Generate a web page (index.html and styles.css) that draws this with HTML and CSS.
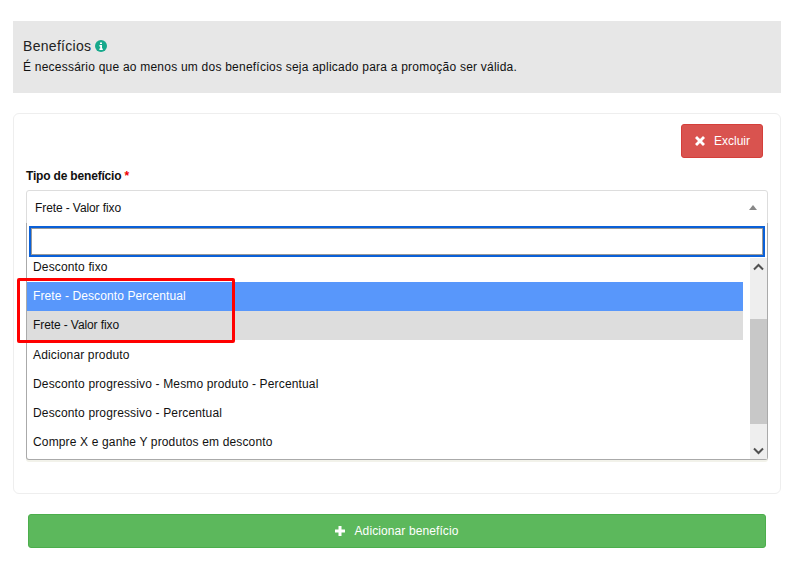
FILE: index.html
```html
<!DOCTYPE html>
<html lang="pt-BR">
<head>
  <meta charset="UTF-8">
  <title>Benefícios</title>
  <link rel="stylesheet" href="styles.css">
</head>
<body>

  <div class="section-head">
    <h4>Benefícios
      <svg class="info-icon" width="12" height="12" viewBox="0 0 12 12"><circle cx="6" cy="6" r="6" fill="#17a98c"/><path d="M5 2.400h2v1.600H5zM4.400 5h2.600v3.400h.8V10H4.400V8.400h.8V6.500h-.8z" fill="#fff"/></svg>
    </h4>
    <p>É necessário que ao menos um dos benefícios seja aplicado para a promoção ser válida.</p>
  </div>

  <div class="card">
    <div class="card-actions">
      <button class="btn btn-danger" type="button">
        <svg width="12" height="12" viewBox="0 0 12 12"><path d="M3 1l3 3 3-3 2 2-3 3 3 3-2 2-3-3-3 3-2-2 3-3-3-3z" fill="#fff"/></svg>
        Excluir
      </button>
    </div>

    <label class="field-label">Tipo de benefício <span class="req">*</span></label>
    <div class="select-wrap">
      <div class="select-box">
        <span class="select-value">Frete - Valor fixo</span>
        <i class="caret"></i>
      </div>

      <div class="dropdown">
        <div class="search"><input type="text"></div>
        <div class="results">
          <ul>
            <li class="first">Desconto fixo</li>
            <li class="highlight">Frete - Desconto Percentual</li>
            <li class="selected">Frete - Valor fixo</li>
            <li>Adicionar produto</li>
            <li>Desconto progressivo - Mesmo produto - Percentual</li>
            <li>Desconto progressivo - Percentual</li>
            <li>Compre X e ganhe Y produtos em desconto</li>
          </ul>
          <div class="scrollbar">
            <div class="arrow"><svg width="11" height="8" viewBox="0 0 11 8"><path d="M1 6.500l4.500-4.500 4.500 4.500" fill="none" stroke="#505050" stroke-width="2"/></svg></div>
            <div class="track"><div class="thumb"></div></div>
            <div class="arrow"><svg width="11" height="8" viewBox="0 0 11 8"><path d="M1 1.500l4.500 4.500 4.500-4.500" fill="none" stroke="#505050" stroke-width="2"/></svg></div>
          </div>
        </div>
      </div>

      <div class="red-mark"></div>
    </div>
  </div>

  <div class="add-row">
    <button class="btn btn-success" type="button">
      <svg width="12" height="12" viewBox="0 0 12 12"><path d="M4.500 1h3v3.500H11v3H7.500V11h-3V7.500H1v-3h3.500z" fill="#fff"/></svg>
      Adicionar benefício
    </button>
  </div>

</body>
</html>
```

FILE: styles.css
```css
body {
  margin: 0;
  padding: 21px 12px 0 13px;
  font-family: "Liberation Sans", Arial, sans-serif;
  font-size: 12px;
  color: #111;
  background: #fff;
}
.section-head {
  background: #e7e7e7;
  height: 72px;
  padding: 16px 10px 0;
  box-sizing: border-box;
}
.section-head h4 {
  margin: 0;
  font-size: 14px;
  font-weight: normal;
  line-height: 18px;
  letter-spacing: 0.3px;
  color: #222;
}
.info-icon {
  vertical-align: -1px;
  margin-left: -1px;
}
.section-head p {
  margin: 5px 0 0;
  line-height: 14px;
  letter-spacing: 0.225px;
}
.card {
  margin-top: 20px;
  height: 381px;
  box-sizing: border-box;
  border: 1px solid #eee;
  border-radius: 6px;
  padding: 10px 12px;
}
.card-actions {
  display: flex;
  justify-content: flex-end;
  padding-right: 5px;
}
.btn {
  display: flex;
  align-items: center;
  justify-content: center;
  gap: 8px;
  height: 34px;
  border-radius: 3px;
  border: 1px solid;
  color: #fff;
  font-family: inherit;
  font-size: 12px;
}
.btn-danger {
  width: 82px;
  background: #d9534f;
  border-color: #d43f3a;
}
.btn-success {
  width: 738px;
  gap: 9px;
  padding: 0 2px 0 0;
  letter-spacing: 0.1px;
  background: #5cb85c;
  border-color: #4cae4c;
}
.field-label {
  display: block;
  margin-top: 11px;
  font-weight: bold;
  line-height: 14px;
  letter-spacing: -0.18px;
}
.req {
  color: #e00;
}
.select-wrap {
  position: relative;
  margin-top: 7px;
}
.select-box {
  height: 34px;
  box-sizing: border-box;
  border: 1px solid #ddd;
  border-radius: 3px 3px 0 0;
  padding: 1px 8px 0;
  display: flex;
  align-items: center;
  justify-content: space-between;
}
.select-value {
  letter-spacing: -0.1px;
}
.caret {
  border-left: 4px solid transparent;
  border-right: 4px solid transparent;
  border-bottom: 5px solid #888;
  margin-right: 2px;
}
.dropdown {
  position: absolute;
  top: 33px;
  left: 0;
  right: 0;
  height: 237px;
  box-sizing: border-box;
  background: #fff;
  border: 1px solid #aaa;
  border-top: 0;
  border-radius: 0 0 3px 3px;
  box-shadow: 0 2px 0 #f2f2ea;
}
.search {
  padding: 3px 2px 1px;
}
.search input {
  display: block;
  width: 100%;
  height: 31px;
  box-sizing: border-box;
  border: 2px solid #0a60d8;
  box-shadow: inset 0 0 0 1px #999;
  outline: 0;
  padding: 0;
}
.results {
  display: flex;
  height: 201px;
}
.results ul {
  list-style: none;
  margin: 0;
  padding: 0;
  flex: 1;
  margin-right: 7px;
}
.results li {
  height: 29px;
  line-height: 31px;
  padding-left: 6px;
  letter-spacing: 0.15px;
}
.results li.first {
  height: 24px;
  line-height: 18px;
}
.results li.highlight {
  line-height: 29px;
  letter-spacing: 0.1px;
  background: #5897fb;
  color: #fff;
}
.results li.selected {
  line-height: 29px;
  letter-spacing: -0.1px;
  background: #ddd;
}
.scrollbar {
  width: 17px;
  display: flex;
  flex-direction: column;
  background: #eee;
}
.arrow {
  height: 17px;
  display: flex;
  align-items: center;
  justify-content: center;
}
.track {
  flex: 1;
  padding-top: 44px;
  padding-bottom: 18px;
}
.thumb {
  height: 105px;
  background: #c8c8c8;
}
.red-mark {
  position: absolute;
  left: -9px;
  top: 88px;
  width: 218px;
  height: 65px;
  box-sizing: border-box;
  border: 3px solid #f00;
  border-radius: 2px;
}
.add-row {
  margin-top: 20px;
  padding-left: 15px;
}
```
